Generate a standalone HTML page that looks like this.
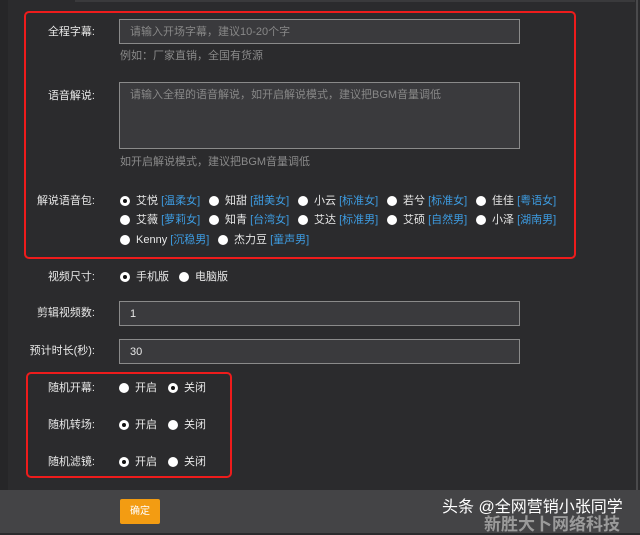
<!DOCTYPE html><html><head><meta charset="utf-8"><style>
*{margin:0;padding:0;box-sizing:border-box}
body{width:640px;height:533px;background:#2b2b2d;font-family:"Liberation Sans","Noto Sans CJK SC",sans-serif;font-size:11px;color:#e8e8e8;position:relative;overflow:hidden}
.a{position:absolute;white-space:nowrap;line-height:14px}
.l{position:absolute;text-align:right;width:90px;left:5px;line-height:14px}
.in{position:absolute;left:119px;width:401px;height:25px;background:#3a3a3d;border:1px solid #8a8a8a;color:#888;padding:6px 10px;line-height:12px}
.h{color:#8a8a8a}
.r{position:absolute;width:10px;height:10px;border-radius:50%;background:#fff}
.r.c::after{content:"";position:absolute;left:3px;top:3px;width:4px;height:4px;border-radius:50%;background:#111}
.b{color:#3d9be0}
.box{position:absolute;border:2px solid #ee1c1c;border-radius:5px}
</style></head><body>
<div style="position:absolute;left:0;top:0;width:8px;height:490px;background:#262628"></div>
<div style="position:absolute;left:75px;top:0;width:560px;height:2px;background:#3a3a3c"></div>
<div style="position:absolute;left:636px;top:0;width:2px;height:490px;background:#4a4a4c"></div>
<div class="box" style="left:24px;top:11px;width:552px;height:248px"></div>
<div class="l" style="top:25px">全程字幕:</div>
<div class="in" style="top:19px">请输入开场字幕，建议10-20个字</div>
<div class="a h" style="left:120px;top:49px">例如：厂家直销，全国有货源</div>
<div class="l" style="top:89px">语音解说:</div>
<div class="in" style="top:82px;height:67px">请输入全程的语音解说，如开启解说模式，建议把BGM音量调低</div>
<div class="a h" style="left:120px;top:155px">如开启解说模式，建议把BGM音量调低</div>
<div class="l" style="top:194px">解说语音包:</div>
<div class="r c" style="left:120px;top:196px"></div><div class="a" style="left:136px;top:194px">艾悦 <span class="b">[温柔女]</span></div>
<div class="r" style="left:209px;top:196px"></div><div class="a" style="left:225px;top:194px">知甜 <span class="b">[甜美女]</span></div>
<div class="r" style="left:298px;top:196px"></div><div class="a" style="left:314px;top:194px">小云 <span class="b">[标准女]</span></div>
<div class="r" style="left:387px;top:196px"></div><div class="a" style="left:403px;top:194px">若兮 <span class="b">[标准女]</span></div>
<div class="r" style="left:476px;top:196px"></div><div class="a" style="left:492px;top:194px">佳佳 <span class="b">[粤语女]</span></div>
<div class="r" style="left:120px;top:215px"></div><div class="a" style="left:136px;top:213px">艾薇 <span class="b">[萝莉女]</span></div>
<div class="r" style="left:209px;top:215px"></div><div class="a" style="left:225px;top:213px">知青 <span class="b">[台湾女]</span></div>
<div class="r" style="left:298px;top:215px"></div><div class="a" style="left:314px;top:213px">艾达 <span class="b">[标准男]</span></div>
<div class="r" style="left:387px;top:215px"></div><div class="a" style="left:403px;top:213px">艾硕 <span class="b">[自然男]</span></div>
<div class="r" style="left:476px;top:215px"></div><div class="a" style="left:492px;top:213px">小泽 <span class="b">[湖南男]</span></div>
<div class="r" style="left:120px;top:235px"></div><div class="a" style="left:136px;top:233px">Kenny <span class="b">[沉稳男]</span></div>
<div class="r" style="left:218px;top:235px"></div><div class="a" style="left:234px;top:233px">杰力豆 <span class="b">[童声男]</span></div>
<div class="l" style="top:270px">视频尺寸:</div>
<div class="r c" style="left:120px;top:272px"></div><div class="a" style="left:136px;top:270px">手机版</div>
<div class="r" style="left:179px;top:272px"></div><div class="a" style="left:195px;top:270px">电脑版</div>
<div class="l" style="top:306px">剪辑视频数:</div>
<div class="in" style="top:301px;color:#e8e8e8">1</div>
<div class="l" style="top:344px">预计时长(秒):</div>
<div class="in" style="top:339px;color:#e8e8e8">30</div>
<div class="box" style="left:26px;top:372px;width:206px;height:106px"></div>
<div class="l" style="top:381px">随机开幕:</div>
<div class="r" style="left:119px;top:383px"></div><div class="a" style="left:135px;top:381px">开启</div>
<div class="r c" style="left:168px;top:383px"></div><div class="a" style="left:184px;top:381px">关闭</div>
<div class="l" style="top:418px">随机转场:</div>
<div class="r c" style="left:119px;top:420px"></div><div class="a" style="left:135px;top:418px">开启</div>
<div class="r" style="left:168px;top:420px"></div><div class="a" style="left:184px;top:418px">关闭</div>
<div class="l" style="top:455px">随机滤镜:</div>
<div class="r c" style="left:119px;top:457px"></div><div class="a" style="left:135px;top:455px">开启</div>
<div class="r" style="left:168px;top:457px"></div><div class="a" style="left:184px;top:455px">关闭</div>
<div style="position:absolute;left:0;top:490px;width:640px;height:43px;background:#444446"></div>
<div style="position:absolute;left:120px;top:499px;width:40px;height:25px;background:#f39c12;border-radius:2px;color:#fff;font-size:10px;text-align:center;line-height:25px">确定</div>
<div class="a" style="left:442px;top:498px;font-size:16px;line-height:20px;color:#fff">头条 @全网营销小张同学</div>
<div class="a" style="left:484px;top:515px;font-size:17px;line-height:20px;color:#9a9a9a;font-weight:bold">新胜大卜网络科技</div>
</body></html>
